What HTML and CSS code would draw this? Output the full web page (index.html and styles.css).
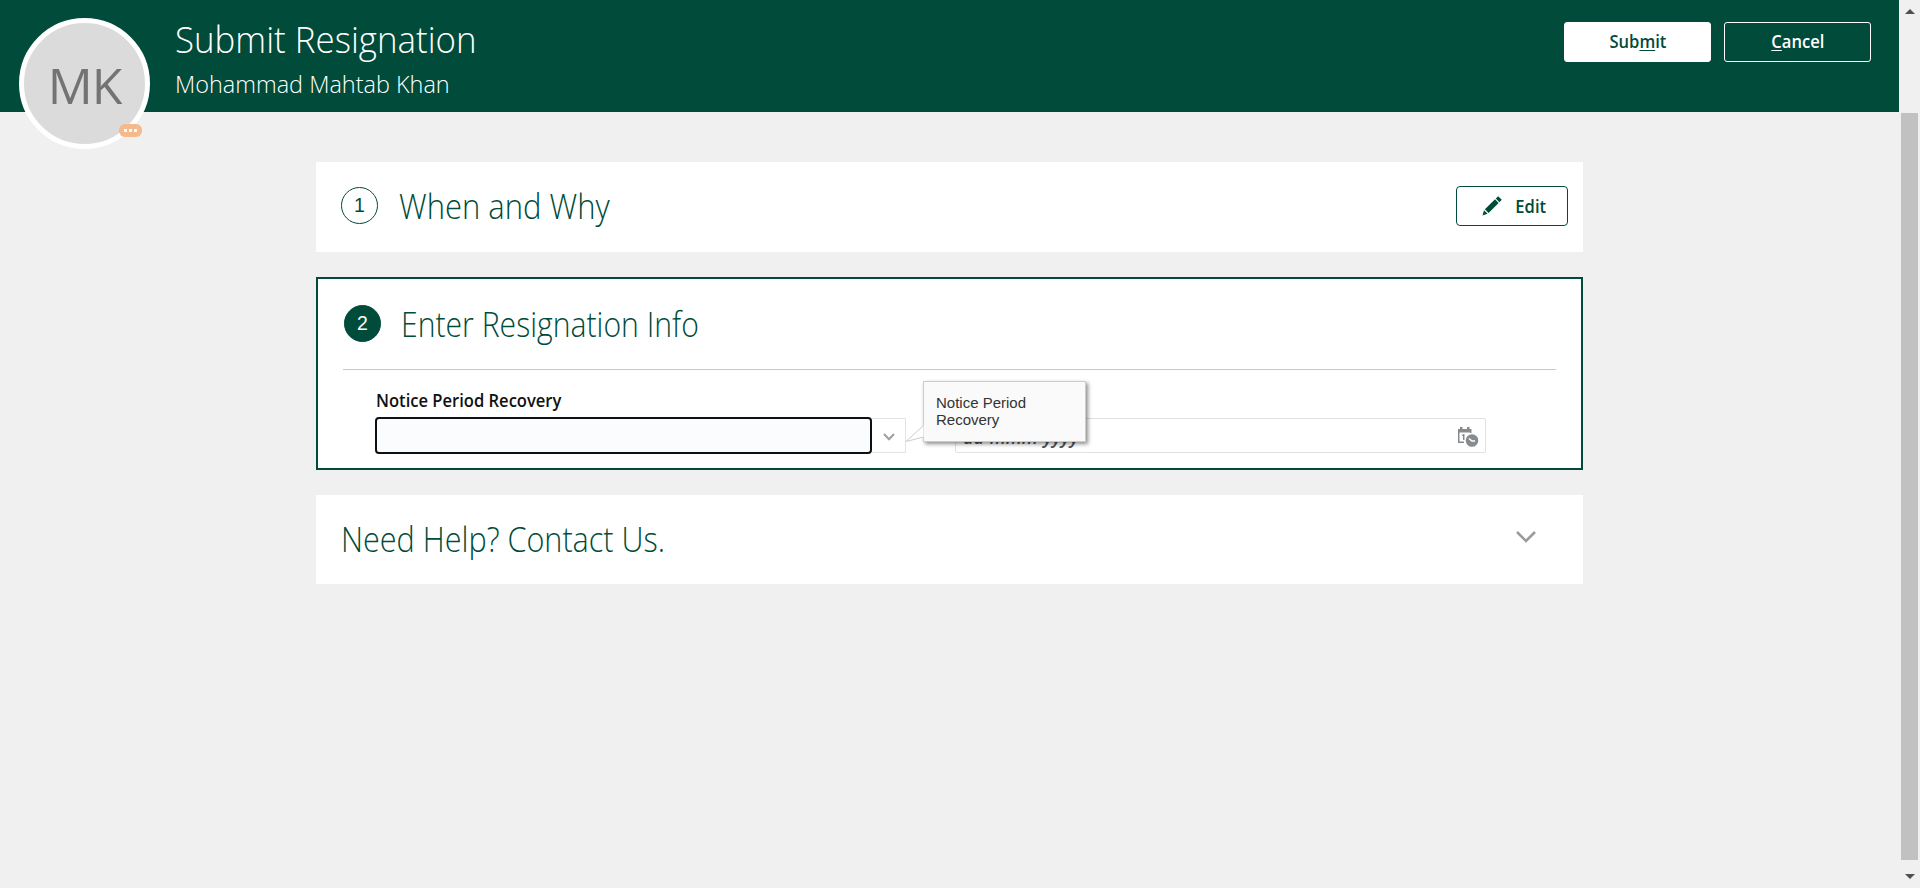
FILE: index.html
```html
<!DOCTYPE html>
<html lang="en">
<head>
<meta charset="utf-8">
<title>Submit Resignation</title>
<link rel="stylesheet" href="styles.css">
</head>
<body>
<div class="page">
  <header class="header">
    <div class="avatar">
      <span class="initials">MK</span>
      <span class="status"><i></i><i></i><i></i></span>
    </div>
    <div class="titles">
      <h1><span class="t-title">Submit Resignation</span></h1>
      <p><span class="t-sub">Mohammad Mahtab Khan</span></p>
    </div>
    <div class="actions">
      <button class="btn primary"><span>Sub<u>m</u>it</span></button>
      <button class="btn outline"><span><u>C</u>ancel</span></button>
    </div>
  </header>
  <main class="content">
    <section class="card when">
      <span class="step">1</span>
      <h2><span class="t-when">When and Why</span></h2>
      <button class="edit">
        <svg width="20" height="20" viewBox="0 0 20 20"><path d="M0.5 19.5L2 14.2L5.6 17.8ZM2.9 13.2L13 3.3L16.6 6.9L6.6 16.9ZM13.8 2.6L16.2 0.3L19.8 3.8L17.4 6.2Z"/></svg>
        <span>Edit</span>
      </button>
    </section>
    <section class="card active">
      <div class="card-head">
        <span class="step filled">2</span>
        <h2><span class="t-enter">Enter Resignation Info</span></h2>
      </div>
      <div class="form">
        <div class="field">
          <label><span class="t-label">Notice Period Recovery</span></label>
          <div class="combo">
            <div class="combo-input"></div>
            <div class="combo-arrow"><svg width="12" height="8" viewBox="0 0 12 8"><path d="M1 1L6 6.3L11 1"/></svg></div>
            <div class="tooltip">
              <svg class="pointer" width="19" height="18" viewBox="0 0 19 18"><path d="M18.5 0.5L1 16.5L18.5 12"/></svg>
              Notice Period<br>Recovery
            </div>
          </div>
        </div>
        <div class="date">
          <span class="t-date">dd-mmm-yyyy</span>
          <svg width="22" height="22" viewBox="0 0 22 22">
            <path class="fill" d="M1 3H3V1H5.5V3H10V1H12.5V3H14.5V7H13V6.5H2.5V15.5H7V17H1Z"/>
            <path class="fill" d="M5 9L6.5 8H7.5V14H6V10H5Z"/>
            <circle class="fill" cx="15" cy="14.5" r="6.3"/>
            <path class="hand" d="M12 12.5L15 15H18"/>
          </svg>
        </div>
      </div>
    </section>
    <section class="card help">
      <h2><span class="t-help">Need Help? Contact Us.</span></h2>
      <svg width="20" height="12" viewBox="0 0 20 12"><path d="M1 1L10 10L19 1"/></svg>
    </section>
  </main>
</div>
<div class="scrollbar">
  <span class="arrow up"></span>
  <span class="thumb"></span>
  <span class="arrow down"></span>
</div>
</body>
</html>
```
FILE: styles.css
```css
* { box-sizing: border-box; }
body { margin: 0; display: flex; height: 888px; overflow: hidden; background: #f0f0f0; font-family: "Open Sans", "Noto Sans", sans-serif; color: #004b3a; }
h1, h2, p { margin: 0; font-weight: 300; white-space: nowrap; }
button { font: inherit; padding: 0; cursor: pointer; }
u { text-decoration: underline; text-decoration-thickness: 1px; text-underline-offset: 2px; }
h1 span, h2 span, p span, label span { display: inline-block; transform-origin: 0 50%; }
.t-title { transform: scaleX(.93); }
.t-sub { transform: scaleX(.977); }
.t-when { transform: scaleX(.912); }
.t-enter { transform: scaleX(.887); }
.t-help { transform: scaleX(.899); }
.t-label { transform: translateX(1px) scaleX(.92); }
.page { width: 1899px; }
.header { height: 112px; background: #004b3a; color: #fff; display: flex; padding-left: 19px; }
.avatar { position: relative; flex: none; width: 131px; height: 131px; margin-top: 18px; border: 5px solid #fff; border-radius: 50%; background: #dbdbdb; display: flex; align-items: center; justify-content: center; }
.initials { color: #737373; font-size: 50px; line-height: 60px; margin-top: 2px; letter-spacing: -1px; }
.status { position: absolute; left: 95px; top: 101px; width: 23px; height: 13px; border-radius: 6px; background: #f5b98c; display: flex; align-items: center; justify-content: center; gap: 2px; }
.status i { width: 3px; height: 3px; background: #fff; }
.titles { margin-left: 25px; padding-top: 13px; flex: 1; }
h1 { font-size: 37.5px; line-height: 52px; }
.titles p { font-size: 24px; line-height: 38px; }
.actions { display: flex; gap: 13px; padding: 22px 28px 0 0; }
.btn { width: 147px; height: 40px; border-radius: 3px; border: 1px solid #fff; font-size: 18px; font-weight: 600; line-height: 18px; padding-bottom: 2px; }
.btn span, .edit span { display: inline-block; transform: scaleX(.92); }
.primary { background: #fff; color: #004b3a; }
.outline { background: transparent; color: #fff; }
.content { width: 1267px; margin: 50px 0 0 316px; display: flex; flex-direction: column; gap: 25px; }
.card { background: #fff; display: flex; }
h2 { font-size: 34px; line-height: 44px; }
.when { height: 90px; align-items: center; padding: 0 15px 2px 25px; }
.step { flex: none; width: 37px; height: 37px; border: 1.5px solid #004b3a; border-radius: 50%; font: 19.5px "Liberation Sans", sans-serif; display: flex; align-items: center; justify-content: center; }
.filled { background: #004b3a; color: #fff; }
.when .step { margin-bottom: 1px; }
.when h2 { flex: 1; margin-left: 21px; }
.edit { width: 112px; height: 40px; border: 1px solid #004b3a; border-radius: 4px; background: #fff; color: #004b3a; display: flex; align-items: center; padding-left: 25px; gap: 12px; font-size: 18px; font-weight: 600; }
.edit svg { fill: #004b3a; }
.active { height: 193px; border: 2px solid #004b3a; flex-direction: column; padding: 0 25px; }
.card-head { height: 91px; border-bottom: 1px solid #c8c8c8; display: flex; align-items: flex-start; padding: 26px 0 0 1px; }
.card-head h2 { margin-left: 20px; margin-top: -3px; }
.form { display: flex; padding-left: 32px; }
.field label { display: block; height: 47px; padding-top: 17px; line-height: 26px; font-size: 18px; font-weight: 600; color: #111; }
.combo { position: relative; display: flex; width: 531px; height: 37px; }
.combo-input { width: 497px; border: 2px solid #0d1114; border-radius: 4px; background: #fbfcfe; }
.combo-arrow { width: 34px; height: 35px; margin-top: 1px; border: 1px solid #dfe4e7; border-left: 0; display: flex; align-items: center; justify-content: center; }
.combo-arrow path { fill: none; stroke: #9aa0a4; stroke-width: 2; }
.combo-arrow svg { margin-top: 2px; }
.tooltip { position: absolute; z-index: 2; left: 548px; top: -36px; width: 163px; height: 61px; background: #fafafa; border: 1px solid #c4ced7; box-shadow: 2px 2px 4px rgba(0,0,0,.45); padding: 12px; font: 15px/17px "Liberation Sans", sans-serif; color: #333; }
.pointer { position: absolute; left: -19px; top: 43px; fill: #fff; stroke: #c4ced7; }
.date { width: 531px; height: 35px; margin: 48px 0 0 49px; border: 1px solid #dfe1e2; border-radius: 2px; display: flex; align-items: center; justify-content: space-between; padding: 2px 6px 0 7px; font-size: 18px; font-weight: 600; font-style: italic; color: #4e5457; }
.t-date { padding-top: 1px; }
.date .fill { fill: #878b8e; }
.date .hand { fill: none; stroke: #fff; stroke-width: 1.5; }
.help { height: 89px; align-items: center; justify-content: space-between; padding: 0 47px 2px 25px; }
.help svg { margin-bottom: 4px; }
.help path { fill: none; stroke: #9b9b9b; stroke-width: 2.6; }
.scrollbar { width: 21px; display: flex; flex-direction: column; align-items: center; padding-top: 9px; }
.arrow { border: 5px solid transparent; border-top: 0; border-bottom-color: #505050; }
.thumb { width: 17px; height: 747px; margin: 99px 0 14px; background: #c1c1c1; }
.down { border-top: 5px solid #505050; border-bottom: 0; }
```
